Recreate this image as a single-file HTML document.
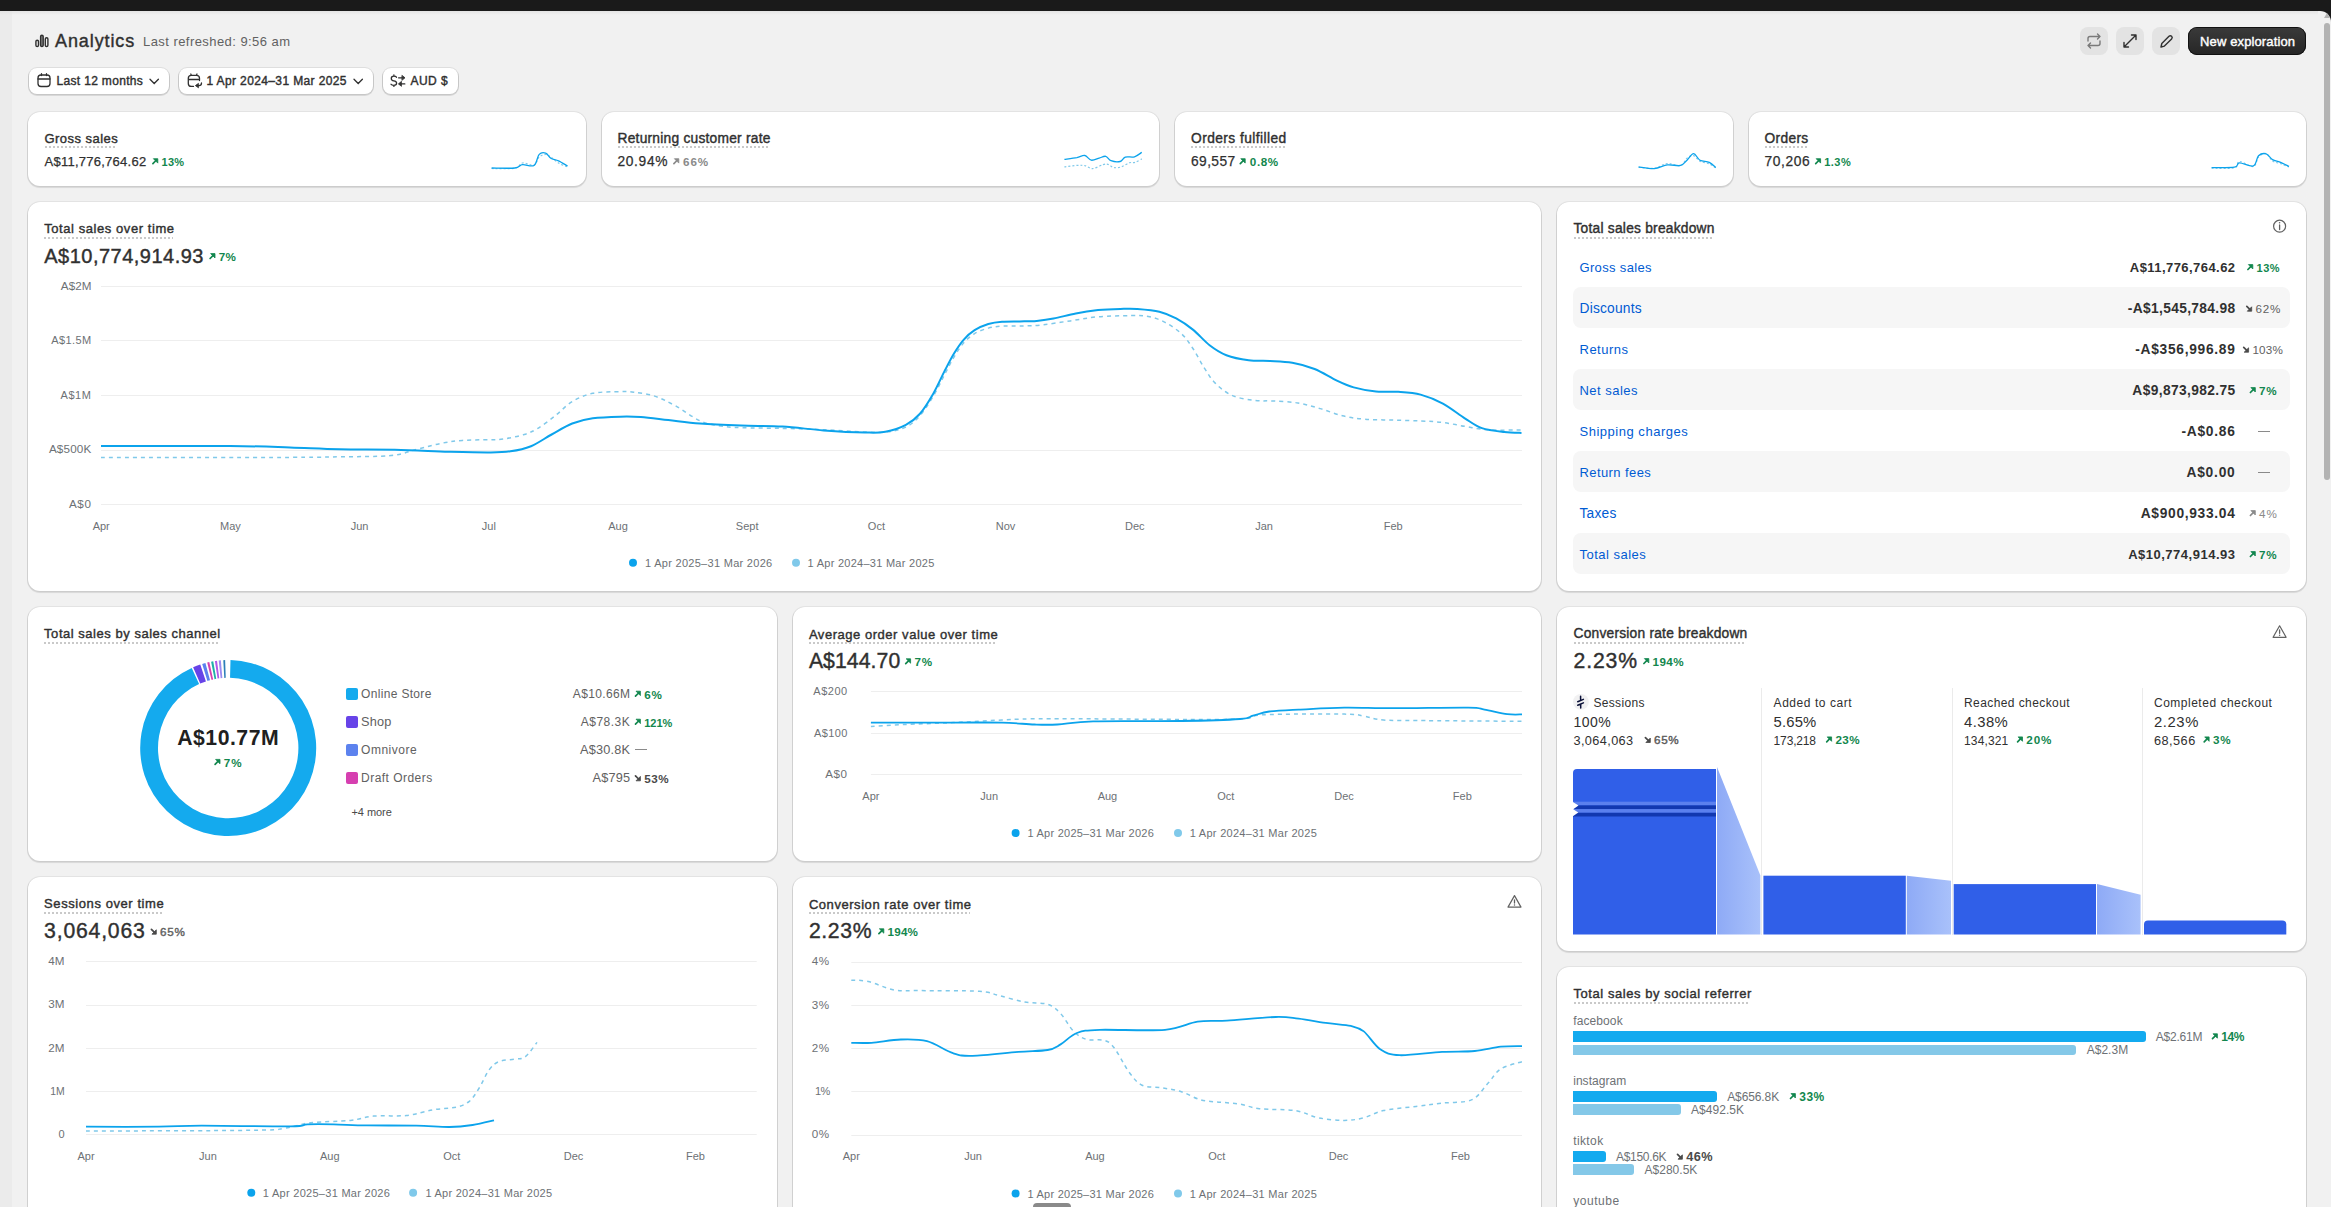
<!DOCTYPE html><html><head><meta charset="utf-8"><style>
html,body{margin:0;padding:0}
html{width:2331px;height:1207px;overflow:hidden}
body{width:2331px;height:1207px;overflow:hidden;position:relative;background:#1a1a1a;font-family:"Liberation Sans", sans-serif}
.t{position:absolute;white-space:nowrap;line-height:1}
svg{position:absolute;left:0;top:0;overflow:visible}
</style></head><body><div id="page" style="position:absolute;left:0;top:0;width:2331px;height:1207px;overflow:hidden">
<div style="position:absolute;left:0px;top:11px;width:12px;height:1196px;background:#ebebeb"></div>
<div style="position:absolute;left:12px;top:11px;width:2319px;height:1196px;background:#f1f1f1;border-top-right-radius:11px"></div>
<div style="position:absolute;left:0px;top:11px;width:12px;height:4px;background:linear-gradient(#e2e2e2,#ebebeb)"></div>
<div style="position:absolute;left:12px;top:11px;width:2306px;height:4px;background:linear-gradient(#e4e4e4,#f1f1f1)"></div>
<svg width="2331" height="1207"><path d="M2324,18 L2330,18 L2327,13 Z" fill="#b3b3b3"/></svg>
<div style="position:absolute;left:2324px;top:23px;width:6px;height:457px;background:#b3b3b3;border-radius:3px"></div>
<svg width="2331" height="1207"><g fill="none" stroke="#303030" stroke-width="1.4">
<rect x="35.9" y="40.3" width="2.6" height="6.2" rx="1.3"/><rect x="40.6" y="35.3" width="2.6" height="11.2" rx="1.3" fill="#888"/><rect x="45.3" y="37.7" width="2.6" height="8.8" rx="1.3"/></g></svg>
<div class="t" style="left:55px;top:32.00px;font-size:18px;font-weight:400;color:#303030;-webkit-text-stroke:0.4px #303030;letter-spacing:0.9px;">Analytics</div>
<div class="t" style="left:143px;top:35.00px;font-size:13px;font-weight:400;color:#616161;letter-spacing:0.442px;">Last refreshed: 9:56 am</div>
<div style="position:absolute;left:29px;top:68px;width:140px;height:26px;background:#fff;border-radius:8px;box-shadow:0 0 0 1px rgba(0,0,0,0.08),0 1px 0 1px rgba(0,0,0,0.10)"></div>
<div style="position:absolute;left:179px;top:68px;width:194px;height:26px;background:#fff;border-radius:8px;box-shadow:0 0 0 1px rgba(0,0,0,0.08),0 1px 0 1px rgba(0,0,0,0.10)"></div>
<div style="position:absolute;left:383px;top:68px;width:75px;height:26px;background:#fff;border-radius:8px;box-shadow:0 0 0 1px rgba(0,0,0,0.08),0 1px 0 1px rgba(0,0,0,0.10)"></div>
<svg width="2331" height="1207"><g fill="none" stroke="#303030" stroke-width="1.3" stroke-linecap="round">
<rect x="38" y="75" width="12" height="11.5" rx="3"/><path d="M38,79 H50 M41.5,73.7 V75.5 M46.5,73.7 V75.5"/>
<path d="M150,79.3 L154.2,83.5 L158.4,79.3"/>
<path d="M193.5,86.4 H191.3 A3,3 0 0 1 188.3,83.4 V78.3 A3,3 0 0 1 191.3,75.3 H196.5 A3,3 0 0 1 199.5,78.3 V80.6 M188.3,79.5 H199.5 M190.8,74 L191.3,75.3 M196.5,75.3 L197,74"/>
<path d="M201.5,83 Q201.5,85.6 199,85.6 H196.5"/><path d="M198.2,83.6 L195.4,85.6 L198.2,87.6 Z" fill="#303030" stroke-width="0.8"/>
<path d="M154,79.3 L158.2,83.5 L162.4,79.3" transform="translate(200,0)"/>
<path d="M396.5,77.3 Q396,76.2 393.8,76.2 Q391.3,76.2 391.3,78.4 Q391.3,80.5 393.8,80.8 Q396.6,81.1 396.6,83.2 Q396.6,85.3 393.8,85.3 Q391.6,85.3 391,84.2 M393.9,75 V76.2 M393.9,85.3 V86.4"/>
<path d="M398.6,77.8 H402.5 M404.8,83.9 H400.9"/><path d="M402.2,75.6 L405,77.8 L402.2,80.1 Z M401.2,81.6 L398.4,83.9 L401.2,86.1 Z" fill="#303030" stroke-width="0.8"/>
</g></svg>
<div class="t" style="left:56.5px;top:75.00px;font-size:12px;font-weight:400;color:#303030;-webkit-text-stroke:0.4px #303030;letter-spacing:0.331px;">Last 12 months</div>
<div class="t" style="left:206.5px;top:75.00px;font-size:12px;font-weight:400;color:#303030;-webkit-text-stroke:0.4px #303030;letter-spacing:0.374px;">1 Apr 2024–31 Mar 2025</div>
<div class="t" style="left:410.5px;top:75.00px;font-size:12px;font-weight:400;color:#303030;-webkit-text-stroke:0.4px #303030;letter-spacing:0.429px;">AUD $</div>
<div style="position:absolute;left:2080px;top:27px;width:28px;height:28px;background:#e3e3e3;border-radius:8px"></div>
<div style="position:absolute;left:2116px;top:27px;width:28px;height:28px;background:#e3e3e3;border-radius:8px"></div>
<div style="position:absolute;left:2152px;top:27px;width:28px;height:28px;background:#e3e3e3;border-radius:8px"></div>
<svg width="2331" height="1207"><g fill="none" stroke-width="1.4" stroke-linecap="round" stroke-linejoin="round">
<path stroke="#7a7a7a" d="M2088,41 V38.5 A2,2 0 0 1 2090,36.5 H2100 M2097.5,34 L2100,36.5 L2097.5,39 M2100,41 V43.5 A2,2 0 0 1 2098,45.5 H2088 M2090.5,43 L2088,45.5 L2090.5,48"/>
<path stroke="#303030" d="M2124,47 L2136,35 M2131.5,35 H2136 V39.5 M2124,42.5 V47 H2128.5"/>
<path stroke="#303030" d="M2161,47 L2161.8,43.5 L2169,36.3 A1.8,1.8 0 0 1 2171.6,38.9 L2164.4,46.1 Z"/>
</g></svg>
<div style="position:absolute;left:2188px;top:27px;width:118px;height:28px;background:linear-gradient(#3a3a3a,#262626);border-radius:9px;box-shadow:0 0 0 1px #111 inset,0 1px 0 rgba(255,255,255,0.2) inset"></div>
<div class="t" style="left:2200px;top:35.00px;font-size:13px;font-weight:400;color:#fff;-webkit-text-stroke:0.4px #fff;letter-spacing:0.13px;">New exploration</div>
<div style="position:absolute;left:28px;top:112px;width:558px;height:74px;background:#fff;border-radius:12px;box-shadow:0 0 0 1px rgba(0,0,0,0.055),0 1px 0 1px rgba(0,0,0,0.075),0 2px 2px rgba(0,0,0,0.03)"></div>
<div style="position:absolute;left:602px;top:112px;width:557px;height:74px;background:#fff;border-radius:12px;box-shadow:0 0 0 1px rgba(0,0,0,0.055),0 1px 0 1px rgba(0,0,0,0.075),0 2px 2px rgba(0,0,0,0.03)"></div>
<div style="position:absolute;left:1175px;top:112px;width:558px;height:74px;background:#fff;border-radius:12px;box-shadow:0 0 0 1px rgba(0,0,0,0.055),0 1px 0 1px rgba(0,0,0,0.075),0 2px 2px rgba(0,0,0,0.03)"></div>
<div style="position:absolute;left:1749px;top:112px;width:557px;height:74px;background:#fff;border-radius:12px;box-shadow:0 0 0 1px rgba(0,0,0,0.055),0 1px 0 1px rgba(0,0,0,0.075),0 2px 2px rgba(0,0,0,0.03)"></div>
<div class="t" style="left:44.5px;top:132.00px;font-size:13px;font-weight:400;color:#303030;-webkit-text-stroke:0.4px #303030;letter-spacing:0.46px;">Gross sales</div>
<div style="position:absolute;left:44.5px;top:146px;width:72.2px;height:2px;background-image:linear-gradient(90deg,#c9c9c9 50%,transparent 50%);background-size:4px 2px"></div>
<div class="t" style="left:44.5px;top:155.00px;font-size:13px;font-weight:400;color:#303030;-webkit-text-stroke:0.25px #303030;letter-spacing:0.254px;">A$11,776,764.62</div>
<svg width="2331" height="1207"><path d="M152.9,163.6 L156,160.5" stroke="#12874e" stroke-width="1.7" stroke-linecap="round"/><path d="M153.4,158.7 H157.8 V163.1 Z" fill="#12874e" stroke="#12874e" stroke-width="0.8" stroke-linejoin="round"/></svg>
<div class="t" style="left:161.4px;top:157.00px;font-size:11px;font-weight:700;color:#12874e;letter-spacing:0.374px;">13%</div>
<div class="t" style="left:617.5px;top:132.00px;font-size:13.78px;font-weight:400;color:#303030;-webkit-text-stroke:0.4px #303030;letter-spacing:0.24px;">Returning customer rate</div>
<div style="position:absolute;left:617.5px;top:146px;width:152.0px;height:2px;background-image:linear-gradient(90deg,#c9c9c9 50%,transparent 50%);background-size:4px 2px"></div>
<div class="t" style="left:617.5px;top:155.00px;font-size:13.78px;font-weight:400;color:#303030;-webkit-text-stroke:0.25px #303030;letter-spacing:0.653px;">20.94%</div>
<svg width="2331" height="1207"><path d="M673.9,163.6 L677,160.5" stroke="#8a8a8a" stroke-width="1.7" stroke-linecap="round"/><path d="M674.4,158.7 H678.8 V163.1 Z" fill="#8a8a8a" stroke="#8a8a8a" stroke-width="0.8" stroke-linejoin="round"/></svg>
<div class="t" style="left:683px;top:156.00px;font-size:11.66px;font-weight:700;color:#8a8a8a;letter-spacing:0.9px;">66%</div>
<div class="t" style="left:1191px;top:132.00px;font-size:13.78px;font-weight:400;color:#303030;-webkit-text-stroke:0.4px #303030;letter-spacing:0.431px;">Orders fulfilled</div>
<div style="position:absolute;left:1191px;top:146px;width:94.20000000000005px;height:2px;background-image:linear-gradient(90deg,#c9c9c9 50%,transparent 50%);background-size:4px 2px"></div>
<div class="t" style="left:1191px;top:155.00px;font-size:13.78px;font-weight:400;color:#303030;-webkit-text-stroke:0.25px #303030;letter-spacing:0.41px;">69,557</div>
<svg width="2331" height="1207"><path d="M1240.3000000000002,163.6 L1243.4,160.5" stroke="#12874e" stroke-width="1.7" stroke-linecap="round"/><path d="M1240.8000000000002,158.7 H1245.2 V163.1 Z" fill="#12874e" stroke="#12874e" stroke-width="0.8" stroke-linejoin="round"/></svg>
<div class="t" style="left:1249.8px;top:156.00px;font-size:11.66px;font-weight:700;color:#12874e;letter-spacing:0.617px;">0.8%</div>
<div class="t" style="left:1764.6px;top:132.00px;font-size:13.78px;font-weight:400;color:#303030;-webkit-text-stroke:0.4px #303030;letter-spacing:0.317px;">Orders</div>
<div style="position:absolute;left:1764.6px;top:146px;width:42.59999999999991px;height:2px;background-image:linear-gradient(90deg,#c9c9c9 50%,transparent 50%);background-size:4px 2px"></div>
<div class="t" style="left:1764.6px;top:155.00px;font-size:13.78px;font-weight:400;color:#303030;-webkit-text-stroke:0.25px #303030;letter-spacing:0.57px;">70,206</div>
<svg width="2331" height="1207"><path d="M1815.7,163.6 L1818.8,160.5" stroke="#12874e" stroke-width="1.7" stroke-linecap="round"/><path d="M1816.2,158.7 H1820.6 V163.1 Z" fill="#12874e" stroke="#12874e" stroke-width="0.8" stroke-linejoin="round"/></svg>
<div class="t" style="left:1824.2px;top:157.00px;font-size:11px;font-weight:700;color:#12874e;letter-spacing:0.467px;">1.3%</div>
<svg width="2331" height="1207"><path d="M491.6,168.5 C495.5,168.5 509.6,169.2 514.8,168.3 C519.9,167.4 519.3,163.6 522.5,163.0 C525.7,162.4 531.2,166.0 534.0,165.0 C536.8,164.0 537.2,158.8 539.2,157.0 C541.2,155.2 543.8,154.5 545.7,154.5 C547.6,154.5 548.7,155.6 550.8,157.0 C552.9,158.4 555.7,161.3 558.5,163.0 C561.3,164.7 566.1,166.3 567.6,167.0" fill="none" stroke="#80c9ea" stroke-width="1.2" stroke-dasharray="2 2"/><path d="M491.6,168.0 C495.5,168.0 509.6,168.6 514.8,168.0 C519.9,167.4 519.3,165.1 522.5,164.7 C525.7,164.3 531.2,167.2 534.0,165.5 C536.8,163.8 537.2,156.5 539.2,154.4 C541.2,152.3 543.8,152.5 545.7,153.2 C547.6,153.8 548.7,157.0 550.8,158.3 C552.9,159.6 555.7,159.6 558.5,160.9 C561.3,162.2 566.1,165.2 567.6,166.0" fill="none" stroke="#0ba3ec" stroke-width="1.3"/></svg>
<svg width="2331" height="1207"><path d="M1064.4,166.8 C1066.5,166.6 1073.5,165.6 1076.9,165.4 C1080.3,165.2 1082.2,165.1 1084.8,165.6 C1087.4,166.1 1089.6,168.8 1092.6,168.6 C1095.6,168.4 1100.4,165.4 1103.0,164.7 C1105.6,164.0 1106.2,163.9 1108.0,164.4 C1109.8,164.9 1111.4,167.1 1113.6,167.5 C1115.8,167.9 1118.4,167.8 1121.0,167.0 C1123.6,166.2 1127.0,163.6 1129.3,162.8 C1131.6,162.0 1132.9,163.1 1135.0,162.4 C1137.1,161.8 1140.7,159.5 1141.8,158.9" fill="none" stroke="#80c9ea" stroke-width="1.2" stroke-dasharray="2 2"/><path d="M1064.4,159.4 C1066.5,159.1 1073.5,158.2 1076.9,157.6 C1080.3,156.9 1082.4,155.1 1084.8,155.5 C1087.2,155.9 1088.9,159.8 1091.3,160.2 C1093.7,160.6 1096.8,158.8 1099.2,158.1 C1101.6,157.4 1103.7,155.9 1105.7,156.3 C1107.7,156.7 1108.6,159.8 1111.0,160.7 C1113.4,161.6 1117.7,162.1 1120.1,161.5 C1122.5,160.9 1122.9,157.9 1125.3,157.1 C1127.7,156.3 1131.8,157.6 1134.5,156.8 C1137.2,156.0 1140.6,153.1 1141.8,152.4" fill="none" stroke="#0ba3ec" stroke-width="1.3"/></svg>
<svg width="2331" height="1207"><path d="M1638.6,167.3 C1641.2,167.5 1649.5,168.8 1654.3,168.2 C1659.1,167.6 1663.0,163.9 1667.4,163.5 C1671.8,163.1 1677.2,166.7 1680.5,165.8 C1683.8,164.9 1684.8,159.9 1687.0,158.2 C1689.2,156.5 1691.4,155.2 1693.6,155.7 C1695.8,156.2 1697.4,159.8 1700.0,161.2 C1702.6,162.5 1706.7,162.7 1709.3,163.8 C1711.9,164.9 1714.7,167.3 1715.8,168.0" fill="none" stroke="#80c9ea" stroke-width="1.2" stroke-dasharray="2 2"/><path d="M1638.6,166.8 C1641.2,167.1 1649.5,168.9 1654.3,168.6 C1659.1,168.3 1663.0,165.4 1667.4,164.9 C1671.8,164.4 1677.2,166.2 1680.5,165.4 C1683.8,164.6 1684.8,162.1 1687.0,160.2 C1689.2,158.2 1691.4,153.7 1693.6,153.7 C1695.8,153.7 1697.4,158.8 1700.0,160.2 C1702.6,161.6 1706.7,161.1 1709.3,162.3 C1711.9,163.5 1714.7,166.6 1715.8,167.5" fill="none" stroke="#0ba3ec" stroke-width="1.3"/></svg>
<svg width="2331" height="1207"><path d="M2211.6,168.2 C2215.4,168.1 2229.8,168.9 2234.4,167.8 C2239.1,166.7 2236.3,161.7 2239.5,161.5 C2242.7,161.3 2250.2,167.2 2253.4,166.5 C2256.6,165.8 2256.4,159.2 2258.5,157.0 C2260.6,154.8 2263.8,152.8 2266.1,153.5 C2268.4,154.2 2270.2,159.3 2272.5,161.0 C2274.8,162.7 2277.2,162.5 2280.0,163.5 C2282.8,164.5 2287.5,166.4 2289.0,167.0" fill="none" stroke="#80c9ea" stroke-width="1.2" stroke-dasharray="2 2"/><path d="M2211.6,167.7 C2215.4,167.6 2229.8,168.0 2234.4,167.2 C2239.1,166.4 2236.3,163.1 2239.5,162.9 C2242.7,162.7 2250.2,167.1 2253.4,165.9 C2256.6,164.7 2256.4,157.8 2258.5,155.8 C2260.6,153.8 2263.8,153.2 2266.1,153.8 C2268.4,154.4 2270.2,158.2 2272.5,159.6 C2274.8,161.0 2277.2,161.0 2280.0,162.1 C2282.8,163.2 2287.5,165.7 2289.0,166.4" fill="none" stroke="#0ba3ec" stroke-width="1.3"/></svg>
<div style="position:absolute;left:28px;top:202px;width:1513px;height:389px;background:#fff;border-radius:12px;box-shadow:0 0 0 1px rgba(0,0,0,0.055),0 1px 0 1px rgba(0,0,0,0.075),0 2px 2px rgba(0,0,0,0.03)"></div>
<div class="t" style="left:44.2px;top:222.00px;font-size:13px;font-weight:400;color:#303030;-webkit-text-stroke:0.4px #303030;letter-spacing:0.567px;">Total sales over time</div>
<div style="position:absolute;left:44.2px;top:236.5px;width:128.8px;height:2.0px;background-image:linear-gradient(90deg,#c9c9c9 50%,transparent 50%);background-size:4px 2px"></div>
<div class="t" style="left:44.2px;top:246.00px;font-size:20px;font-weight:400;color:#303030;-webkit-text-stroke:0.4px #303030;letter-spacing:0.495px;">A$10,774,914.93</div>
<svg width="2331" height="1207"><path d="M210.1,258.5 L213.2,255.4" stroke="#12874e" stroke-width="1.7" stroke-linecap="round"/><path d="M210.6,253.6 H215.0 V258.0 Z" fill="#12874e" stroke="#12874e" stroke-width="0.8" stroke-linejoin="round"/></svg>
<div class="t" style="left:218.79999999999998px;top:251.00px;font-size:11.66px;font-weight:700;color:#12874e;letter-spacing:0.272px;">7%</div>
<svg width="2331" height="1207"><path d="M101,286.5 H1522" stroke="#eeeeee" stroke-width="1"/><path d="M101,340.5 H1522" stroke="#eeeeee" stroke-width="1"/><path d="M101,395.5 H1522" stroke="#eeeeee" stroke-width="1"/><path d="M101,450.5 H1522" stroke="#eeeeee" stroke-width="1"/><path d="M101,504.5 H1522" stroke="#eeeeee" stroke-width="1"/></svg>
<div class="t" style="right:2239.5px;top:280.00px;font-size:11.66px;font-weight:400;color:#6d7175;letter-spacing:0.053px;">A$2M</div>
<div class="t" style="right:2239.5px;top:335.00px;font-size:11px;font-weight:400;color:#6d7175;letter-spacing:0.392px;">A$1.5M</div>
<div class="t" style="right:2239.5px;top:390.00px;font-size:11px;font-weight:400;color:#6d7175;letter-spacing:0.543px;">A$1M</div>
<div class="t" style="right:2239.5px;top:443.00px;font-size:11.66px;font-weight:400;color:#6d7175;letter-spacing:0.185px;">A$500K</div>
<div class="t" style="right:2239.5px;top:498.00px;font-size:11.66px;font-weight:400;color:#6d7175;letter-spacing:0.59px;">A$0</div>
<div class="t" style="left:101.2px;transform:translateX(-50%);top:521.00px;font-size:11px;font-weight:400;color:#6d7175;">Apr</div>
<div class="t" style="left:230.39999999999998px;transform:translateX(-50%);top:521.00px;font-size:11px;font-weight:400;color:#6d7175;">May</div>
<div class="t" style="left:359.59999999999997px;transform:translateX(-50%);top:521.00px;font-size:11px;font-weight:400;color:#6d7175;">Jun</div>
<div class="t" style="left:488.79999999999995px;transform:translateX(-50%);top:521.00px;font-size:11px;font-weight:400;color:#6d7175;">Jul</div>
<div class="t" style="left:618.0px;transform:translateX(-50%);top:521.00px;font-size:11px;font-weight:400;color:#6d7175;">Aug</div>
<div class="t" style="left:747.2px;transform:translateX(-50%);top:521.00px;font-size:11px;font-weight:400;color:#6d7175;">Sept</div>
<div class="t" style="left:876.4px;transform:translateX(-50%);top:521.00px;font-size:11px;font-weight:400;color:#6d7175;">Oct</div>
<div class="t" style="left:1005.5999999999999px;transform:translateX(-50%);top:521.00px;font-size:11px;font-weight:400;color:#6d7175;">Nov</div>
<div class="t" style="left:1134.8px;transform:translateX(-50%);top:521.00px;font-size:11px;font-weight:400;color:#6d7175;">Dec</div>
<div class="t" style="left:1264.0px;transform:translateX(-50%);top:521.00px;font-size:11px;font-weight:400;color:#6d7175;">Jan</div>
<div class="t" style="left:1393.2px;transform:translateX(-50%);top:521.00px;font-size:11px;font-weight:400;color:#6d7175;">Feb</div>
<svg width="2331" height="1207"><path d="M101.0,457.4 C131.1,457.4 241.9,457.5 281.6,457.4 C321.4,457.3 321.3,457.1 339.5,456.8 C357.7,456.5 377.9,456.8 391.0,455.5 C404.1,454.2 409.9,450.9 418.4,448.9 C426.9,446.8 434.5,444.6 441.8,443.2 C449.1,441.8 454.4,441.0 462.4,440.4 C470.4,439.8 482.9,439.9 489.8,439.7 C496.7,439.5 497.9,439.9 503.6,439.0 C509.3,438.1 518.5,436.3 524.2,434.5 C529.9,432.7 532.6,431.5 537.9,428.3 C543.1,425.1 550.0,419.8 555.7,415.3 C561.4,410.9 566.0,405.3 572.2,401.6 C578.4,397.9 584.8,395.0 592.8,393.3 C600.8,391.6 613.4,391.8 620.3,391.6 C627.2,391.4 628.3,391.4 634.0,392.2 C639.7,392.9 647.7,393.9 654.6,396.1 C661.5,398.4 667.6,401.6 675.2,405.7 C682.8,409.8 692.4,417.4 700.0,420.8 C707.6,424.2 713.7,424.9 720.6,426.0 C727.5,427.1 730.9,427.3 741.2,427.7 C751.5,428.1 768.7,428.1 782.4,428.4 C796.1,428.7 809.9,429.1 823.6,429.7 C837.3,430.3 854.0,431.6 864.7,432.0 C875.4,432.4 881.1,432.6 888.0,431.8 C894.9,431.0 900.6,429.6 905.9,427.0 C911.2,424.4 915.1,421.2 919.7,416.0 C924.3,410.8 929.3,402.8 933.4,396.0 C937.5,389.2 941.0,381.5 944.4,375.0 C947.8,368.5 950.8,362.3 954.0,357.0 C957.2,351.7 960.2,346.9 963.6,343.0 C967.0,339.1 970.5,336.1 974.6,333.6 C978.7,331.1 983.7,329.4 988.3,328.1 C992.9,326.9 996.7,326.5 1002.0,326.1 C1007.3,325.8 1013.3,326.2 1020.0,326.0 C1026.7,325.8 1033.9,325.8 1042.3,324.9 C1050.7,324.0 1060.9,322.2 1070.2,320.9 C1079.5,319.5 1087.9,317.7 1098.1,316.8 C1108.3,315.9 1123.1,315.7 1131.5,315.6 C1139.9,315.5 1142.7,315.3 1148.3,316.4 C1153.9,317.5 1159.4,319.4 1165.0,322.3 C1170.6,325.2 1177.0,329.6 1181.7,334.0 C1186.4,338.4 1189.2,342.9 1192.9,348.5 C1196.6,354.1 1200.3,361.7 1204.0,367.5 C1207.7,373.3 1210.5,378.5 1215.2,383.1 C1219.9,387.8 1225.5,392.5 1232.0,395.4 C1238.5,398.3 1247.3,399.5 1254.2,400.4 C1261.1,401.3 1266.0,400.6 1273.3,401.0 C1280.6,401.4 1290.1,401.7 1297.9,403.0 C1305.7,404.3 1312.8,406.5 1320.2,408.6 C1327.6,410.7 1335.1,414.0 1342.5,415.8 C1349.9,417.6 1356.4,418.5 1364.8,419.2 C1373.2,419.9 1383.4,419.8 1392.7,420.1 C1402.0,420.4 1412.2,420.5 1420.6,420.9 C1429.0,421.3 1435.5,421.6 1442.9,422.5 C1450.3,423.4 1457.8,425.2 1465.2,426.4 C1472.6,427.6 1478.1,429.2 1487.5,429.8 C1496.9,430.4 1515.8,430.0 1521.5,430.0" fill="none" stroke="#80c9ea" stroke-width="1.5" stroke-dasharray="4 4"/><path d="M101.0,446.0 C122.5,446.0 198.5,445.8 230.0,446.0 C261.5,446.2 271.8,446.9 290.0,447.5 C308.2,448.1 322.0,448.9 339.5,449.3 C357.0,449.7 376.8,449.3 395.0,449.7 C413.2,450.1 432.8,451.2 448.6,451.7 C464.4,452.1 479.5,452.5 489.8,452.4 C500.1,452.3 503.5,452.3 510.4,451.3 C517.3,450.3 524.1,449.0 531.0,446.2 C537.9,443.4 544.7,438.3 551.6,434.5 C558.5,430.7 565.3,426.2 572.2,423.5 C579.1,420.8 584.8,419.4 592.8,418.3 C600.8,417.2 612.3,416.9 620.3,416.7 C628.3,416.5 632.8,416.5 640.8,417.1 C648.8,417.7 658.4,419.0 668.3,420.1 C678.2,421.2 687.9,422.7 700.0,423.6 C712.1,424.5 727.5,425.1 741.2,425.6 C754.9,426.1 768.7,425.8 782.4,426.6 C796.1,427.4 809.9,429.4 823.6,430.4 C837.3,431.4 854.4,432.3 864.7,432.5 C875.0,432.7 878.4,433.1 885.3,431.8 C892.2,430.5 900.2,427.9 905.9,424.9 C911.6,421.9 915.1,419.2 919.7,414.0 C924.3,408.8 929.3,400.5 933.4,393.4 C937.5,386.3 941.0,378.0 944.4,371.4 C947.8,364.8 950.8,358.8 954.0,353.5 C957.2,348.2 960.2,343.7 963.6,339.8 C967.0,335.9 970.5,332.8 974.6,330.2 C978.7,327.6 983.7,325.4 988.3,324.0 C992.9,322.6 996.7,322.1 1002.0,321.7 C1007.3,321.3 1014.2,321.5 1020.0,321.4 C1025.8,321.3 1031.1,321.4 1036.7,320.9 C1042.3,320.4 1047.0,319.9 1053.5,318.6 C1060.0,317.4 1068.4,314.8 1075.8,313.4 C1083.2,312.0 1090.7,310.9 1098.1,310.1 C1105.5,309.4 1113.9,309.1 1120.4,308.9 C1126.9,308.7 1130.6,308.4 1137.1,308.9 C1143.6,309.4 1152.9,310.1 1159.4,311.7 C1165.9,313.3 1170.6,315.4 1176.2,318.4 C1181.8,321.4 1187.3,325.1 1192.9,329.6 C1198.5,334.1 1204.0,340.9 1209.6,345.2 C1215.2,349.5 1219.9,352.7 1226.4,355.2 C1232.9,357.7 1241.4,359.3 1248.7,360.3 C1256.0,361.3 1262.7,360.6 1270.0,361.0 C1277.3,361.4 1284.9,361.5 1292.3,362.8 C1299.7,364.1 1307.2,366.0 1314.6,369.0 C1322.0,372.0 1330.4,377.6 1336.9,380.7 C1343.4,383.8 1347.2,385.6 1353.7,387.4 C1360.2,389.2 1368.6,390.9 1376.0,391.6 C1383.4,392.3 1390.9,391.3 1398.3,391.8 C1405.7,392.3 1413.2,392.6 1420.6,394.6 C1428.0,396.6 1435.5,399.6 1442.9,403.6 C1450.3,407.6 1458.7,414.5 1465.2,418.6 C1471.7,422.7 1475.4,425.9 1481.9,428.1 C1488.4,430.3 1497.6,431.2 1504.2,432.0 C1510.8,432.8 1518.6,432.8 1521.5,432.9" fill="none" stroke="#0ba3ec" stroke-width="2.0"/></svg>
<svg width="2331" height="1207"><circle cx="633" cy="562.8" r="4" fill="#0ba3ec"/><circle cx="796" cy="562.8" r="4" fill="#80c9ea"/></svg>
<div class="t" style="left:645px;top:558.00px;font-size:11px;font-weight:400;color:#6d7175;letter-spacing:0.29px;">1 Apr 2025–31 Mar 2026</div>
<div class="t" style="left:807.6px;top:558.00px;font-size:11px;font-weight:400;color:#6d7175;letter-spacing:0.266px;">1 Apr 2024–31 Mar 2025</div>
<div style="position:absolute;left:1557px;top:202px;width:749px;height:389px;background:#fff;border-radius:12px;box-shadow:0 0 0 1px rgba(0,0,0,0.055),0 1px 0 1px rgba(0,0,0,0.075),0 2px 2px rgba(0,0,0,0.03)"></div>
<div class="t" style="left:1573.5px;top:222.00px;font-size:13.78px;font-weight:400;color:#303030;-webkit-text-stroke:0.4px #303030;letter-spacing:0.237px;">Total sales breakdown</div>
<div style="position:absolute;left:1573.5px;top:236.5px;width:140.0px;height:2.0px;background-image:linear-gradient(90deg,#c9c9c9 50%,transparent 50%);background-size:4px 2px"></div>
<svg width="2331" height="1207"><circle cx="2279.6" cy="226.2" r="6" fill="none" stroke="#616161" stroke-width="1.2"/><path d="M2279.6,225 V229.5" stroke="#616161" stroke-width="1.3" stroke-linecap="round"/><circle cx="2279.6" cy="222.8" r="0.8" fill="#616161"/></svg>
<div class="t" style="left:1579.5px;top:261.00px;font-size:13px;font-weight:400;color:#005bd3;letter-spacing:0.34px;">Gross sales</div>
<div class="t" style="right:95.5px;top:261.00px;font-size:13px;font-weight:700;color:#303030;letter-spacing:0.442px;">A$11,776,764.62</div>
<svg width="2331" height="1207"><path d="M2247.9,269.5 L2251,266.4" stroke="#12874e" stroke-width="1.7" stroke-linecap="round"/><path d="M2248.4,264.59999999999997 H2252.8 V269.0 Z" fill="#12874e" stroke="#12874e" stroke-width="0.8" stroke-linejoin="round"/></svg>
<div class="t" style="left:2256.6px;top:263.00px;font-size:11px;font-weight:700;color:#12874e;letter-spacing:0.424px;">13%</div>
<div style="position:absolute;left:1573px;top:287px;width:717px;height:41px;background:#f6f6f6;border-radius:8px"></div>
<div class="t" style="left:1579.5px;top:302.00px;font-size:13.78px;font-weight:400;color:#005bd3;letter-spacing:0.2px;">Discounts</div>
<div class="t" style="right:95.5px;top:302.00px;font-size:13.78px;font-weight:700;color:#303030;letter-spacing:0.338px;">-A$1,545,784.98</div>
<svg width="2331" height="1207"><path d="M2246.8,306.29999999999995 L2249.9,309.4" stroke="#4a4a4a" stroke-width="1.7" stroke-linecap="round"/><path d="M2247.3,311.2 H2251.7000000000003 V306.79999999999995 Z" fill="#4a4a4a" stroke="#4a4a4a" stroke-width="0.8" stroke-linejoin="round"/></svg>
<div class="t" style="left:2255.5px;top:303.00px;font-size:11.66px;font-weight:400;color:#616161;letter-spacing:0.79px;">62%</div>
<div class="t" style="left:1579.5px;top:343.00px;font-size:13px;font-weight:400;color:#005bd3;letter-spacing:0.501px;">Returns</div>
<div class="t" style="right:95.5px;top:343.00px;font-size:13.78px;font-weight:700;color:#303030;letter-spacing:0.702px;">-A$356,996.89</div>
<svg width="2331" height="1207"><path d="M2243.7000000000003,347.29999999999995 L2246.8,350.4" stroke="#4a4a4a" stroke-width="1.7" stroke-linecap="round"/><path d="M2244.2000000000003,352.2 H2248.6000000000004 V347.79999999999995 Z" fill="#4a4a4a" stroke="#4a4a4a" stroke-width="0.8" stroke-linejoin="round"/></svg>
<div class="t" style="left:2252.4px;top:344.00px;font-size:11.66px;font-weight:400;color:#616161;letter-spacing:0.201px;">103%</div>
<div style="position:absolute;left:1573px;top:369px;width:717px;height:41px;background:#f6f6f6;border-radius:8px"></div>
<div class="t" style="left:1579.5px;top:384.00px;font-size:13px;font-weight:400;color:#005bd3;letter-spacing:0.48px;">Net sales</div>
<div class="t" style="right:95.5px;top:384.00px;font-size:13.78px;font-weight:700;color:#303030;letter-spacing:0.371px;">A$9,873,982.75</div>
<svg width="2331" height="1207"><path d="M2250.4,392.5 L2253.5,389.4" stroke="#12874e" stroke-width="1.7" stroke-linecap="round"/><path d="M2250.9,387.59999999999997 H2255.3 V392.0 Z" fill="#12874e" stroke="#12874e" stroke-width="0.8" stroke-linejoin="round"/></svg>
<div class="t" style="left:2259.1px;top:385.00px;font-size:11.66px;font-weight:700;color:#12874e;letter-spacing:0.672px;">7%</div>
<div class="t" style="left:1579.5px;top:425.00px;font-size:13px;font-weight:400;color:#005bd3;letter-spacing:0.518px;">Shipping charges</div>
<div class="t" style="right:95.5px;top:425.00px;font-size:13.78px;font-weight:700;color:#303030;letter-spacing:0.713px;">-A$0.86</div>
<div style="position:absolute;left:2257.5px;top:431px;width:12.0px;height:1px;background:#8a8a8a"></div>
<div style="position:absolute;left:1573px;top:451px;width:717px;height:41px;background:#f6f6f6;border-radius:8px"></div>
<div class="t" style="left:1579.5px;top:466.00px;font-size:13px;font-weight:400;color:#005bd3;letter-spacing:0.414px;">Return fees</div>
<div class="t" style="right:95.5px;top:466.00px;font-size:13.78px;font-weight:700;color:#303030;letter-spacing:0.773px;">A$0.00</div>
<div style="position:absolute;left:2257.5px;top:472px;width:12.0px;height:1px;background:#8a8a8a"></div>
<div class="t" style="left:1579.5px;top:507.00px;font-size:13.78px;font-weight:400;color:#005bd3;letter-spacing:0.224px;">Taxes</div>
<div class="t" style="right:95.5px;top:507.00px;font-size:13.78px;font-weight:700;color:#303030;letter-spacing:0.692px;">A$900,933.04</div>
<svg width="2331" height="1207"><path d="M2250.4,515.5 L2253.5,512.4" stroke="#8a8a8a" stroke-width="1.7" stroke-linecap="round"/><path d="M2250.9,510.59999999999997 H2255.3 V515.0 Z" fill="#8a8a8a" stroke="#8a8a8a" stroke-width="0.8" stroke-linejoin="round"/></svg>
<div class="t" style="left:2259.1px;top:508.00px;font-size:11.66px;font-weight:400;color:#8a8a8a;letter-spacing:0.9px;">4%</div>
<div style="position:absolute;left:1573px;top:533px;width:717px;height:41px;background:#f6f6f6;border-radius:8px"></div>
<div class="t" style="left:1579.5px;top:548.00px;font-size:13px;font-weight:400;color:#005bd3;letter-spacing:0.492px;">Total sales</div>
<div class="t" style="right:95.5px;top:548.00px;font-size:13px;font-weight:700;color:#303030;letter-spacing:0.505px;">A$10,774,914.93</div>
<svg width="2331" height="1207"><path d="M2250.4,556.5 L2253.5,553.4" stroke="#12874e" stroke-width="1.7" stroke-linecap="round"/><path d="M2250.9,551.6 H2255.3 V556.0 Z" fill="#12874e" stroke="#12874e" stroke-width="0.8" stroke-linejoin="round"/></svg>
<div class="t" style="left:2259.1px;top:549.00px;font-size:11.66px;font-weight:700;color:#12874e;letter-spacing:0.572px;">7%</div>
<div style="position:absolute;left:28px;top:607px;width:749px;height:254px;background:#fff;border-radius:12px;box-shadow:0 0 0 1px rgba(0,0,0,0.055),0 1px 0 1px rgba(0,0,0,0.075),0 2px 2px rgba(0,0,0,0.03)"></div>
<div class="t" style="left:44.1px;top:627.00px;font-size:13px;font-weight:400;color:#303030;-webkit-text-stroke:0.4px #303030;letter-spacing:0.528px;">Total sales by sales channel</div>
<div style="position:absolute;left:44.1px;top:641.5px;width:175.1px;height:2.0px;background-image:linear-gradient(90deg,#c9c9c9 50%,transparent 50%);background-size:4px 2px"></div>
<svg width="2331" height="1207"><path d="M230.50,660.03 A88,88 0 1 1 191.71,667.92 L199.09,684.12 A70.2,70.2 0 1 0 230.04,677.82 Z" fill="#14aaee"/><path d="M193.11,667.30 A88,88 0 0 1 200.28,664.55 L205.93,681.43 A70.2,70.2 0 0 0 200.21,683.62 Z" fill="#6743e8"/><path d="M202.18,663.94 A88,88 0 0 1 205.42,663.00 L210.03,680.19 A70.2,70.2 0 0 0 207.44,680.94 Z" fill="#5c82ee"/><path d="M207.21,662.54 A88,88 0 0 1 209.30,662.05 L213.13,679.44 A70.2,70.2 0 0 0 211.45,679.83 Z" fill="#d63fb0"/><path d="M211.11,661.68 A88,88 0 0 1 213.22,661.28 L216.25,678.82 A70.2,70.2 0 0 0 214.56,679.14 Z" fill="#20b0a8"/><path d="M214.89,661.01 A88,88 0 0 1 217.02,660.71 L219.28,678.37 A70.2,70.2 0 0 0 217.58,678.61 Z" fill="#b15ae8"/><path d="M218.70,660.51 A88,88 0 0 1 220.84,660.31 L222.33,678.05 A70.2,70.2 0 0 0 220.62,678.21 Z" fill="#9b8cf0"/><path d="M223.29,660.14 A88,88 0 0 1 225.13,660.05 L225.75,677.84 A70.2,70.2 0 0 0 224.28,677.91 Z" fill="#2d7fb8"/></svg>
<div class="t" style="left:228.2px;transform:translateX(-50%);top:727.00px;font-size:21.2px;font-weight:700;color:#202020;letter-spacing:0.525px;">A$10.77M</div>
<svg width="2331" height="1207"><path d="M215.1,764.3 L218.2,761.1999999999999" stroke="#12874e" stroke-width="1.7" stroke-linecap="round"/><path d="M215.6,759.4 H220.0 V763.8 Z" fill="#12874e" stroke="#12874e" stroke-width="0.8" stroke-linejoin="round"/></svg>
<div class="t" style="left:223.79999999999998px;top:757.00px;font-size:11.66px;font-weight:700;color:#12874e;letter-spacing:0.9px;">7%</div>
<div style="position:absolute;left:346px;top:688px;width:12px;height:12px;background:#14aaee;border-radius:2px"></div>
<div class="t" style="left:361.1px;top:688.00px;font-size:12px;font-weight:400;color:#616161;letter-spacing:0.323px;">Online Store</div>
<div class="t" style="right:1700.7px;top:688.00px;font-size:12px;font-weight:400;color:#616161;letter-spacing:0.351px;">A$10.66M</div>
<svg width="2331" height="1207"><path d="M635.5,696.1 L638.6,693.0" stroke="#12874e" stroke-width="1.7" stroke-linecap="round"/><path d="M636.0,691.2 H640.4 V695.6 Z" fill="#12874e" stroke="#12874e" stroke-width="0.8" stroke-linejoin="round"/></svg>
<div class="t" style="left:644.2px;top:689.00px;font-size:11.66px;font-weight:700;color:#12874e;letter-spacing:0.9px;">6%</div>
<div style="position:absolute;left:346px;top:716px;width:12px;height:12px;background:#6743e8;border-radius:2px"></div>
<div class="t" style="left:361.1px;top:716.00px;font-size:12.72px;font-weight:400;color:#616161;letter-spacing:0.168px;">Shop</div>
<div class="t" style="right:1700.7px;top:716.00px;font-size:12px;font-weight:400;color:#616161;letter-spacing:0.502px;">A$78.3K</div>
<svg width="2331" height="1207"><path d="M635.5,724.1 L638.6,721.0" stroke="#12874e" stroke-width="1.7" stroke-linecap="round"/><path d="M636.0,719.2 H640.4 V723.6 Z" fill="#12874e" stroke="#12874e" stroke-width="0.8" stroke-linejoin="round"/></svg>
<div class="t" style="left:644.2px;top:718.00px;font-size:11px;font-weight:700;color:#12874e;">121%</div>
<div style="position:absolute;left:346px;top:744px;width:12px;height:12px;background:#5c82ee;border-radius:2px"></div>
<div class="t" style="left:361.1px;top:744.00px;font-size:12px;font-weight:400;color:#616161;letter-spacing:0.492px;">Omnivore</div>
<div class="t" style="right:1700.7px;top:744.00px;font-size:12.72px;font-weight:400;color:#616161;letter-spacing:0.218px;">A$30.8K</div>
<div style="position:absolute;left:635.4px;top:749px;width:11.600000000000023px;height:1px;background:#8a8a8a"></div>
<div style="position:absolute;left:346px;top:772px;width:12px;height:12px;background:#d63fb0;border-radius:2px"></div>
<div class="t" style="left:361.1px;top:772.00px;font-size:12px;font-weight:400;color:#616161;letter-spacing:0.459px;">Draft Orders</div>
<div class="t" style="right:1700.7px;top:772.00px;font-size:12.72px;font-weight:400;color:#616161;letter-spacing:0.183px;">A$795</div>
<svg width="2331" height="1207"><path d="M635.5,775.9 L638.6,779.0" stroke="#4a4a4a" stroke-width="1.7" stroke-linecap="round"/><path d="M636.0,780.8 H640.4 V776.4 Z" fill="#4a4a4a" stroke="#4a4a4a" stroke-width="0.8" stroke-linejoin="round"/></svg>
<div class="t" style="left:644.2px;top:773.00px;font-size:11.66px;font-weight:700;color:#4a4a4a;letter-spacing:0.49px;">53%</div>
<div class="t" style="left:351.4px;top:807.00px;font-size:11px;font-weight:400;color:#4a4a4a;letter-spacing:-0.032px;">+4 more</div>
<div style="position:absolute;left:793px;top:607px;width:748px;height:254px;background:#fff;border-radius:12px;box-shadow:0 0 0 1px rgba(0,0,0,0.055),0 1px 0 1px rgba(0,0,0,0.075),0 2px 2px rgba(0,0,0,0.03)"></div>
<div class="t" style="left:808.9px;top:628.00px;font-size:13px;font-weight:400;color:#303030;-webkit-text-stroke:0.4px #303030;letter-spacing:0.533px;">Average order value over time</div>
<div style="position:absolute;left:808.9px;top:642px;width:187.80000000000007px;height:2px;background-image:linear-gradient(90deg,#c9c9c9 50%,transparent 50%);background-size:4px 2px"></div>
<div class="t" style="left:808.9px;top:650.00px;font-size:21.2px;font-weight:400;color:#303030;-webkit-text-stroke:0.4px #303030;letter-spacing:0.088px;">A$144.70</div>
<svg width="2331" height="1207"><path d="M905.6999999999999,663.7 L908.8,660.6" stroke="#12874e" stroke-width="1.7" stroke-linecap="round"/><path d="M906.1999999999999,658.8000000000001 H910.5999999999999 V663.2 Z" fill="#12874e" stroke="#12874e" stroke-width="0.8" stroke-linejoin="round"/></svg>
<div class="t" style="left:914.4px;top:656.00px;font-size:11.66px;font-weight:700;color:#12874e;letter-spacing:0.772px;">7%</div>
<svg width="2331" height="1207"><path d="M870.9,691.5 H1522" stroke="#eeeeee" stroke-width="1"/><path d="M870.9,733.5 H1522" stroke="#eeeeee" stroke-width="1"/><path d="M870.9,774.5 H1522" stroke="#eeeeee" stroke-width="1"/></svg>
<div class="t" style="right:1483.3px;top:686.00px;font-size:11px;font-weight:400;color:#6d7175;letter-spacing:0.517px;">A$200</div>
<div class="t" style="right:1483.3px;top:728.00px;font-size:11px;font-weight:400;color:#6d7175;letter-spacing:0.392px;">A$100</div>
<div class="t" style="right:1483.3px;top:768.00px;font-size:11.66px;font-weight:400;color:#6d7175;letter-spacing:0.59px;">A$0</div>
<div class="t" style="left:870.9px;transform:translateX(-50%);top:791.00px;font-size:11px;font-weight:400;color:#6d7175;">Apr</div>
<div class="t" style="left:989.18px;transform:translateX(-50%);top:791.00px;font-size:11px;font-weight:400;color:#6d7175;">Jun</div>
<div class="t" style="left:1107.46px;transform:translateX(-50%);top:791.00px;font-size:11px;font-weight:400;color:#6d7175;">Aug</div>
<div class="t" style="left:1225.74px;transform:translateX(-50%);top:791.00px;font-size:11px;font-weight:400;color:#6d7175;">Oct</div>
<div class="t" style="left:1344.02px;transform:translateX(-50%);top:791.00px;font-size:11px;font-weight:400;color:#6d7175;">Dec</div>
<div class="t" style="left:1462.3px;transform:translateX(-50%);top:791.00px;font-size:11px;font-weight:400;color:#6d7175;">Feb</div>
<svg width="2331" height="1207"><path d="M870.9,726.5 C876.4,726.2 890.4,725.1 904.1,724.5 C917.8,723.9 936.7,723.4 953.0,722.6 C969.3,721.9 985.7,720.6 1002.0,720.0 C1018.3,719.4 1012.8,718.8 1050.8,718.7 C1088.8,718.6 1194.7,719.9 1230.0,719.3 C1265.3,718.6 1243.8,715.7 1262.8,714.8 C1281.8,713.9 1327.5,713.9 1344.3,714.1 C1361.1,714.3 1357.3,715.1 1363.8,716.1 C1370.3,717.1 1373.1,719.2 1383.4,720.0 C1393.7,720.8 1402.7,720.4 1425.8,720.6 C1448.9,720.8 1506.0,721.2 1522.0,721.3" fill="none" stroke="#80c9ea" stroke-width="1.5" stroke-dasharray="4 4"/><path d="M870.9,722.6 C884.6,722.6 931.1,722.6 953.0,722.6 C974.9,722.6 988.4,722.3 1002.0,722.6 C1015.6,722.9 1025.3,724.2 1034.5,724.5 C1043.7,724.8 1047.6,725.0 1057.4,724.5 C1067.2,724.0 1072.6,721.9 1093.2,721.3 C1113.8,720.7 1156.8,721.4 1181.3,721.0 C1205.8,720.6 1228.0,719.9 1240.0,719.0 C1252.0,718.1 1248.1,717.0 1253.0,715.7 C1257.9,714.5 1261.7,712.5 1269.3,711.5 C1276.9,710.5 1286.1,710.2 1298.6,709.6 C1311.1,709.0 1328.5,707.8 1344.3,707.6 C1360.1,707.4 1372.5,708.2 1393.2,708.2 C1413.9,708.2 1453.0,707.4 1468.2,707.6 C1483.4,707.8 1478.0,708.5 1484.5,709.6 C1491.0,710.7 1501.0,713.3 1507.3,714.1 C1513.5,714.9 1519.5,714.4 1522.0,714.4" fill="none" stroke="#0ba3ec" stroke-width="1.8"/></svg>
<svg width="2331" height="1207"><circle cx="1015.6" cy="833.1" r="4" fill="#0ba3ec"/><circle cx="1178" cy="833.1" r="4" fill="#80c9ea"/></svg>
<div class="t" style="left:1027.4px;top:828.00px;font-size:11px;font-weight:400;color:#6d7175;letter-spacing:0.252px;">1 Apr 2025–31 Mar 2026</div>
<div class="t" style="left:1189.7px;top:828.00px;font-size:11px;font-weight:400;color:#6d7175;letter-spacing:0.285px;">1 Apr 2024–31 Mar 2025</div>
<div style="position:absolute;left:1557px;top:607px;width:749px;height:344px;background:#fff;border-radius:12px;box-shadow:0 0 0 1px rgba(0,0,0,0.055),0 1px 0 1px rgba(0,0,0,0.075),0 2px 2px rgba(0,0,0,0.03)"></div>
<div class="t" style="left:1573.5px;top:627.00px;font-size:13.78px;font-weight:400;color:#303030;-webkit-text-stroke:0.4px #303030;letter-spacing:0.224px;">Conversion rate breakdown</div>
<div style="position:absolute;left:1573.5px;top:641.5px;width:172.79999999999995px;height:2.0px;background-image:linear-gradient(90deg,#c9c9c9 50%,transparent 50%);background-size:4px 2px"></div>
<svg width="2331" height="1207"><path d="M2279.6,625.8 L2286.1,637.3 H2273.1 Z" fill="none" stroke="#616161" stroke-width="1.2" stroke-linejoin="round"/><path d="M2279.6,630.0 V633.3" stroke="#616161" stroke-width="1.3" stroke-linecap="round"/><circle cx="2279.6" cy="635.1999999999999" r="0.75" fill="#616161"/></svg>
<div class="t" style="left:1573.5px;top:650.00px;font-size:21.2px;font-weight:400;color:#303030;-webkit-text-stroke:0.4px #303030;letter-spacing:0.869px;">2.23%</div>
<svg width="2331" height="1207"><path d="M1643.9,663.5 L1647,660.4" stroke="#12874e" stroke-width="1.7" stroke-linecap="round"/><path d="M1644.4,658.6 H1648.8 V663.0 Z" fill="#12874e" stroke="#12874e" stroke-width="0.8" stroke-linejoin="round"/></svg>
<div class="t" style="left:1652.6px;top:656.00px;font-size:11.66px;font-weight:700;color:#12874e;letter-spacing:0.401px;">194%</div>
<div style="position:absolute;left:1761px;top:688px;width:1px;height:247px;background:#ebebeb"></div>
<div style="position:absolute;left:1952px;top:688px;width:1px;height:247px;background:#ebebeb"></div>
<div style="position:absolute;left:2142px;top:688px;width:1px;height:247px;background:#ebebeb"></div>
<div class="t" style="left:1593.4px;top:697.00px;font-size:12px;font-weight:400;color:#303030;letter-spacing:0.337px;">Sessions</div>
<div class="t" style="left:1573.5px;top:715.00px;font-size:14px;font-weight:400;color:#303030;letter-spacing:0.436px;">100%</div>
<div class="t" style="left:1573.5px;top:735.00px;font-size:12.72px;font-weight:400;color:#303030;letter-spacing:0.378px;">3,064,063</div>
<svg width="2331" height="1207"><path d="M1645.4,737.5999999999999 L1648.5,740.6999999999999" stroke="#4a4a4a" stroke-width="1.7" stroke-linecap="round"/><path d="M1645.9,742.4999999999999 H1650.3 V738.0999999999999 Z" fill="#4a4a4a" stroke="#4a4a4a" stroke-width="0.8" stroke-linejoin="round"/></svg>
<div class="t" style="left:1654.1px;top:734.00px;font-size:11.66px;font-weight:400;color:#5a5a5a;-webkit-text-stroke:0.4px #5a5a5a;letter-spacing:0.64px;">65%</div>
<div class="t" style="left:1773.6px;top:697.00px;font-size:12px;font-weight:400;color:#303030;letter-spacing:0.547px;">Added to cart</div>
<div class="t" style="left:1773.6px;top:715.00px;font-size:14.84px;font-weight:400;color:#303030;letter-spacing:0.15px;">5.65%</div>
<div class="t" style="left:1773.6px;top:735.00px;font-size:12px;font-weight:400;color:#303030;letter-spacing:-0.155px;">173,218</div>
<svg width="2331" height="1207"><path d="M1826.7,741.8 L1829.8,738.6999999999999" stroke="#12874e" stroke-width="1.7" stroke-linecap="round"/><path d="M1827.2,736.9 H1831.6 V741.3 Z" fill="#12874e" stroke="#12874e" stroke-width="0.8" stroke-linejoin="round"/></svg>
<div class="t" style="left:1835.3999999999999px;top:734.00px;font-size:11.66px;font-weight:700;color:#12874e;letter-spacing:0.44px;">23%</div>
<div class="t" style="left:1964px;top:697.00px;font-size:12px;font-weight:400;color:#303030;letter-spacing:0.41px;">Reached checkout</div>
<div class="t" style="left:1964px;top:715.00px;font-size:14.84px;font-weight:400;color:#303030;letter-spacing:0.425px;">4.38%</div>
<div class="t" style="left:1964px;top:735.00px;font-size:12px;font-weight:400;color:#303030;letter-spacing:0.145px;">134,321</div>
<svg width="2331" height="1207"><path d="M2017.6000000000001,741.8 L2020.7,738.6999999999999" stroke="#12874e" stroke-width="1.7" stroke-linecap="round"/><path d="M2018.1000000000001,736.9 H2022.5 V741.3 Z" fill="#12874e" stroke="#12874e" stroke-width="0.8" stroke-linejoin="round"/></svg>
<div class="t" style="left:2026.3px;top:734.00px;font-size:11.66px;font-weight:700;color:#12874e;letter-spacing:0.9px;">20%</div>
<div class="t" style="left:2154px;top:697.00px;font-size:12px;font-weight:400;color:#303030;letter-spacing:0.503px;">Completed checkout</div>
<div class="t" style="left:2154px;top:715.00px;font-size:14.84px;font-weight:400;color:#303030;letter-spacing:0.575px;">2.23%</div>
<div class="t" style="left:2154px;top:735.00px;font-size:12.72px;font-weight:400;color:#303030;letter-spacing:0.462px;">68,566</div>
<svg width="2331" height="1207"><path d="M2204.2000000000003,741.8 L2207.3,738.6999999999999" stroke="#12874e" stroke-width="1.7" stroke-linecap="round"/><path d="M2204.7000000000003,736.9 H2209.1000000000004 V741.3 Z" fill="#12874e" stroke="#12874e" stroke-width="0.8" stroke-linejoin="round"/></svg>
<div class="t" style="left:2212.9px;top:734.00px;font-size:11.66px;font-weight:700;color:#12874e;letter-spacing:0.9px;">3%</div>
<svg width="2331" height="1207"><circle cx="1580.9" cy="701.9" r="7.9" fill="#f1f1f2"/><path d="M1580.6,696.2 V699.6 M1583.4,699.4 L1577.7,701.8 M1583.4,702.9 L1577.7,705.2 M1580.7,704 V708" fill="none" stroke="#0b1138" stroke-width="1.5" stroke-linecap="round"/></svg>
<svg width="2331" height="1207">
<defs><linearGradient id="tg" x1="0" x2="1" y1="0" y2="0"><stop offset="0" stop-color="#8eaaf6"/><stop offset="1" stop-color="#a9c1fa"/></linearGradient></defs>
<path d="M1573,934.5 V773 A4,4 0 0 1 1577,769 H1716 V934.5 Z" fill="#305fe8"/>
<rect x="1573" y="801.7" width="143" height="3.7" fill="#5b80ee"/>
<rect x="1573" y="805.4" width="143" height="3.7" fill="#1238b0"/>
<rect x="1573" y="809.1" width="143" height="3.7" fill="#5b80ee"/>
<rect x="1573" y="812.8" width="143" height="3.7" fill="#1238b0"/>
<path d="M1572.5,801.7 L1578.5,805.4 L1573.2,809.3 L1578.3,812.6 L1572.5,816.5 Z" fill="#fff"/>
<path d="M1717,767 L1760.4,875.4 V934.5 H1717 Z" fill="url(#tg)"/>
<rect x="1763.4" y="875.7" width="142.4" height="58.8" fill="#305fe8"/>
<path d="M1906.8,875.7 L1951,880.7 V934.5 H1906.8 Z" fill="url(#tg)"/>
<rect x="1953.7" y="884.1" width="142.3" height="50.4" fill="#305fe8"/>
<path d="M2097,884.1 L2140.6,894.8 V934.5 H2097 Z" fill="url(#tg)"/>
<path d="M2144,934.5 V924.6 A4,4 0 0 1 2148,920.6 H2282.3 A4,4 0 0 1 2286.3,924.6 V934.5 Z" fill="#305fe8"/>
</svg>
<div style="position:absolute;left:28px;top:877px;width:749px;height:353px;background:#fff;border-radius:12px;box-shadow:0 0 0 1px rgba(0,0,0,0.055),0 1px 0 1px rgba(0,0,0,0.075),0 2px 2px rgba(0,0,0,0.03)"></div>
<div class="t" style="left:44.1px;top:897.00px;font-size:13px;font-weight:400;color:#303030;-webkit-text-stroke:0.4px #303030;letter-spacing:0.577px;">Sessions over time</div>
<div style="position:absolute;left:44.1px;top:911.5px;width:118.6px;height:2.0px;background-image:linear-gradient(90deg,#c9c9c9 50%,transparent 50%);background-size:4px 2px"></div>
<div class="t" style="left:44.1px;top:920.00px;font-size:21.2px;font-weight:400;color:#303030;-webkit-text-stroke:0.4px #303030;letter-spacing:0.809px;">3,064,063</div>
<svg width="2331" height="1207"><path d="M151.4,929.3 L154.5,932.4" stroke="#4a4a4a" stroke-width="1.7" stroke-linecap="round"/><path d="M151.9,934.1999999999999 H156.3 V929.8 Z" fill="#4a4a4a" stroke="#4a4a4a" stroke-width="0.8" stroke-linejoin="round"/></svg>
<div class="t" style="left:160.1px;top:926.00px;font-size:11.66px;font-weight:400;color:#616161;-webkit-text-stroke:0.4px #616161;letter-spacing:0.69px;">65%</div>
<svg width="2331" height="1207"><path d="M86,961.5 H756.7" stroke="#eeeeee" stroke-width="1"/><path d="M86,1005.5 H756.7" stroke="#eeeeee" stroke-width="1"/><path d="M86,1048.5 H756.7" stroke="#eeeeee" stroke-width="1"/><path d="M86,1091.5 H756.7" stroke="#eeeeee" stroke-width="1"/><path d="M86,1134.5 H756.7" stroke="#eeeeee" stroke-width="1"/></svg>
<div class="t" style="right:2266.4px;top:955.00px;font-size:11.66px;font-weight:400;color:#6d7175;letter-spacing:0.135px;">4M</div>
<div class="t" style="right:2266.4px;top:998.00px;font-size:11.66px;font-weight:400;color:#6d7175;letter-spacing:0.135px;">3M</div>
<div class="t" style="right:2266.4px;top:1042.00px;font-size:11.66px;font-weight:400;color:#6d7175;letter-spacing:0.135px;">2M</div>
<div class="t" style="right:2266.4px;top:1087.00px;font-size:10.45px;font-weight:400;color:#6d7175;letter-spacing:-0.081px;">1M</div>
<div class="t" style="right:2266.4px;top:1129.00px;font-size:11px;font-weight:400;color:#6d7175;">0</div>
<div class="t" style="left:86.0px;transform:translateX(-50%);top:1151.00px;font-size:11px;font-weight:400;color:#6d7175;">Apr</div>
<div class="t" style="left:207.9px;transform:translateX(-50%);top:1151.00px;font-size:11px;font-weight:400;color:#6d7175;">Jun</div>
<div class="t" style="left:329.8px;transform:translateX(-50%);top:1151.00px;font-size:11px;font-weight:400;color:#6d7175;">Aug</div>
<div class="t" style="left:451.70000000000005px;transform:translateX(-50%);top:1151.00px;font-size:11px;font-weight:400;color:#6d7175;">Oct</div>
<div class="t" style="left:573.6px;transform:translateX(-50%);top:1151.00px;font-size:11px;font-weight:400;color:#6d7175;">Dec</div>
<div class="t" style="left:695.5px;transform:translateX(-50%);top:1151.00px;font-size:11px;font-weight:400;color:#6d7175;">Feb</div>
<svg width="2331" height="1207"><path d="M86.0,1131.0 C113.5,1130.9 218.2,1130.8 251.3,1130.3 C284.4,1129.8 274.4,1129.6 284.3,1128.3 C294.2,1127.0 299.7,1124.0 310.7,1122.7 C321.7,1121.4 339.9,1121.5 350.4,1120.4 C360.9,1119.3 364.1,1116.9 373.5,1116.1 C382.9,1115.3 396.6,1116.5 406.5,1115.5 C416.4,1114.5 424.8,1111.2 433.0,1109.8 C441.2,1108.4 449.9,1108.6 456.0,1107.2 C462.1,1105.8 465.4,1104.5 469.3,1101.3 C473.2,1098.1 475.9,1093.2 479.2,1088.0 C482.5,1082.8 485.8,1074.3 489.1,1069.9 C492.4,1065.5 494.6,1063.4 499.0,1061.6 C503.4,1059.8 511.1,1059.8 515.5,1059.0 C519.9,1058.2 521.8,1059.5 525.4,1056.7 C529.0,1053.9 535.1,1044.8 537.0,1042.4" fill="none" stroke="#80c9ea" stroke-width="1.5" stroke-dasharray="4 4"/><path d="M86.0,1126.7 C98.1,1126.7 139.5,1126.9 158.8,1126.7 C178.1,1126.5 179.7,1125.8 201.7,1125.7 C223.7,1125.7 273.3,1126.6 290.9,1126.4 C308.5,1126.2 300.2,1124.7 307.4,1124.4 C314.5,1124.1 323.9,1124.2 333.8,1124.4 C343.7,1124.6 353.1,1125.2 366.9,1125.4 C380.7,1125.6 402.6,1125.4 416.4,1125.7 C430.2,1126.0 440.1,1127.1 449.5,1127.0 C458.9,1126.9 465.2,1126.1 472.6,1125.0 C480.0,1123.9 490.4,1121.2 494.0,1120.4" fill="none" stroke="#0ba3ec" stroke-width="1.8"/></svg>
<svg width="2331" height="1207"><circle cx="251.3" cy="1192.8" r="4" fill="#0ba3ec"/><circle cx="413.1" cy="1192.8" r="4" fill="#80c9ea"/></svg>
<div class="t" style="left:262.8px;top:1188.00px;font-size:11px;font-weight:400;color:#6d7175;letter-spacing:0.285px;">1 Apr 2025–31 Mar 2026</div>
<div class="t" style="left:425.4px;top:1188.00px;font-size:11px;font-weight:400;color:#6d7175;letter-spacing:0.266px;">1 Apr 2024–31 Mar 2025</div>
<div style="position:absolute;left:793px;top:877px;width:748px;height:353px;background:#fff;border-radius:12px;box-shadow:0 0 0 1px rgba(0,0,0,0.055),0 1px 0 1px rgba(0,0,0,0.075),0 2px 2px rgba(0,0,0,0.03)"></div>
<div class="t" style="left:808.9px;top:898.00px;font-size:13px;font-weight:400;color:#303030;-webkit-text-stroke:0.4px #303030;letter-spacing:0.554px;">Conversion rate over time</div>
<div style="position:absolute;left:808.9px;top:912px;width:161.10000000000002px;height:2px;background-image:linear-gradient(90deg,#c9c9c9 50%,transparent 50%);background-size:4px 2px"></div>
<svg width="2331" height="1207"><path d="M1514.5,895.6 L1521.0,907.1 H1508.0 Z" fill="none" stroke="#616161" stroke-width="1.2" stroke-linejoin="round"/><path d="M1514.5,899.8000000000001 V903.1" stroke="#616161" stroke-width="1.3" stroke-linecap="round"/><circle cx="1514.5" cy="905.0" r="0.75" fill="#616161"/></svg>
<div class="t" style="left:808.9px;top:920.00px;font-size:21.2px;font-weight:400;color:#303030;-webkit-text-stroke:0.4px #303030;letter-spacing:0.644px;">2.23%</div>
<svg width="2331" height="1207"><path d="M878.9,933.7 L882,930.6" stroke="#12874e" stroke-width="1.7" stroke-linecap="round"/><path d="M879.4,928.8000000000001 H883.8 V933.2 Z" fill="#12874e" stroke="#12874e" stroke-width="0.8" stroke-linejoin="round"/></svg>
<div class="t" style="left:887.6px;top:926.00px;font-size:11.66px;font-weight:700;color:#12874e;letter-spacing:0.168px;">194%</div>
<svg width="2331" height="1207"><path d="M851.3,962.5 H1522" stroke="#eeeeee" stroke-width="1"/><path d="M851.3,1005.5 H1522" stroke="#eeeeee" stroke-width="1"/><path d="M851.3,1048.5 H1522" stroke="#eeeeee" stroke-width="1"/><path d="M851.3,1091.5 H1522" stroke="#eeeeee" stroke-width="1"/><path d="M851.3,1135.5 H1522" stroke="#eeeeee" stroke-width="1"/></svg>
<div class="t" style="right:1501.2px;top:955.00px;font-size:11.66px;font-weight:400;color:#6d7175;letter-spacing:0.572px;">4%</div>
<div class="t" style="right:1501.2px;top:999.00px;font-size:11.66px;font-weight:400;color:#6d7175;letter-spacing:0.572px;">3%</div>
<div class="t" style="right:1501.2px;top:1042.00px;font-size:11.66px;font-weight:400;color:#6d7175;letter-spacing:0.572px;">2%</div>
<div class="t" style="right:1501.2px;top:1086.00px;font-size:11px;font-weight:400;color:#6d7175;letter-spacing:-0.526px;">1%</div>
<div class="t" style="right:1501.2px;top:1128.00px;font-size:11.66px;font-weight:400;color:#6d7175;letter-spacing:0.572px;">0%</div>
<div class="t" style="left:851.3px;transform:translateX(-50%);top:1151.00px;font-size:11px;font-weight:400;color:#6d7175;">Apr</div>
<div class="t" style="left:973.1199999999999px;transform:translateX(-50%);top:1151.00px;font-size:11px;font-weight:400;color:#6d7175;">Jun</div>
<div class="t" style="left:1094.94px;transform:translateX(-50%);top:1151.00px;font-size:11px;font-weight:400;color:#6d7175;">Aug</div>
<div class="t" style="left:1216.76px;transform:translateX(-50%);top:1151.00px;font-size:11px;font-weight:400;color:#6d7175;">Oct</div>
<div class="t" style="left:1338.58px;transform:translateX(-50%);top:1151.00px;font-size:11px;font-weight:400;color:#6d7175;">Dec</div>
<div class="t" style="left:1460.3999999999999px;transform:translateX(-50%);top:1151.00px;font-size:11px;font-weight:400;color:#6d7175;">Feb</div>
<svg width="2331" height="1207"><path d="M851.3,980.2 C854.1,980.4 861.1,979.9 868.3,981.5 C875.5,983.1 885.6,988.5 894.3,990.0 C903.0,991.5 906.3,990.4 920.4,990.6 C934.5,990.8 966.0,990.5 979.1,991.3 C992.2,992.1 991.1,993.7 998.7,995.5 C1006.3,997.3 1016.6,1000.5 1024.8,1002.0 C1032.9,1003.5 1041.6,1002.4 1047.6,1004.3 C1053.6,1006.2 1056.2,1009.0 1060.6,1013.5 C1064.9,1018.0 1069.3,1027.1 1073.7,1031.4 C1078.1,1035.7 1080.7,1037.6 1086.7,1039.5 C1092.7,1041.4 1102.4,1037.3 1109.5,1042.8 C1116.6,1048.2 1123.7,1065.1 1129.1,1072.2 C1134.5,1079.3 1136.7,1082.6 1142.1,1085.2 C1147.5,1087.8 1155.2,1086.7 1161.7,1087.8 C1168.2,1088.9 1174.8,1089.7 1181.3,1091.7 C1187.8,1093.7 1194.3,1098.2 1200.8,1099.9 C1207.3,1101.7 1213.9,1101.5 1220.4,1102.2 C1226.9,1102.9 1233.5,1103.0 1240.0,1104.1 C1246.5,1105.2 1250.3,1107.6 1259.5,1108.7 C1268.7,1109.8 1285.6,1109.1 1295.4,1110.6 C1305.2,1112.1 1310.1,1116.2 1318.2,1117.8 C1326.3,1119.4 1336.7,1120.4 1344.3,1120.4 C1351.9,1120.4 1357.3,1119.4 1363.8,1117.8 C1370.3,1116.2 1374.7,1112.5 1383.4,1110.6 C1392.1,1108.7 1406.2,1107.7 1416.0,1106.4 C1425.8,1105.2 1432.9,1104.2 1442.1,1103.1 C1451.3,1102.0 1463.8,1103.2 1471.4,1099.9 C1479.0,1096.7 1482.8,1088.8 1487.7,1083.6 C1492.6,1078.4 1495.1,1072.6 1500.8,1068.9 C1506.5,1065.2 1518.5,1062.9 1522.0,1061.7" fill="none" stroke="#80c9ea" stroke-width="1.5" stroke-dasharray="4 4"/><path d="M851.3,1042.8 C854.7,1042.8 863.2,1043.3 871.5,1042.8 C879.8,1042.2 891.6,1039.8 900.9,1039.5 C910.1,1039.2 918.3,1038.9 927.0,1041.2 C935.7,1043.5 945.4,1050.8 953.0,1053.2 C960.6,1055.6 961.7,1056.0 972.6,1055.8 C983.5,1055.6 1005.7,1052.9 1018.2,1051.9 C1030.7,1050.9 1040.5,1051.2 1047.6,1050.0 C1054.7,1048.8 1055.7,1047.2 1060.6,1044.4 C1065.5,1041.6 1070.4,1035.4 1076.9,1033.0 C1083.4,1030.6 1085.1,1030.3 1099.8,1029.8 C1114.5,1029.3 1148.7,1031.2 1165.0,1029.8 C1181.3,1028.4 1187.3,1023.1 1197.6,1021.6 C1207.9,1020.1 1213.9,1021.4 1226.9,1020.6 C1239.9,1019.8 1263.8,1017.3 1275.8,1017.0 C1287.8,1016.7 1289.9,1017.7 1298.6,1018.7 C1307.3,1019.7 1319.3,1022.0 1328.0,1023.2 C1336.7,1024.4 1344.8,1024.5 1350.8,1025.9 C1356.8,1027.3 1358.9,1027.5 1363.8,1031.4 C1368.7,1035.3 1374.2,1045.3 1380.2,1049.3 C1386.2,1053.3 1389.4,1054.8 1399.7,1055.2 C1410.0,1055.6 1429.6,1052.6 1442.1,1051.9 C1454.6,1051.2 1464.9,1051.9 1474.7,1051.0 C1484.5,1050.1 1492.9,1047.5 1500.8,1046.7 C1508.7,1045.9 1518.5,1046.2 1522.0,1046.1" fill="none" stroke="#0ba3ec" stroke-width="1.8"/></svg>
<svg width="2331" height="1207"><circle cx="1015.6" cy="1193.4" r="4" fill="#0ba3ec"/><circle cx="1178" cy="1193.4" r="4" fill="#80c9ea"/></svg>
<div class="t" style="left:1027.4px;top:1189.00px;font-size:11px;font-weight:400;color:#6d7175;letter-spacing:0.252px;">1 Apr 2025–31 Mar 2026</div>
<div class="t" style="left:1189.7px;top:1189.00px;font-size:11px;font-weight:400;color:#6d7175;letter-spacing:0.285px;">1 Apr 2024–31 Mar 2025</div>
<div style="position:absolute;left:1033px;top:1203px;width:38px;height:12px;background:#8a8a8a;border-radius:4px"></div>
<div style="position:absolute;left:1557px;top:967px;width:749px;height:333px;background:#fff;border-radius:12px;box-shadow:0 0 0 1px rgba(0,0,0,0.055),0 1px 0 1px rgba(0,0,0,0.075),0 2px 2px rgba(0,0,0,0.03)"></div>
<div class="t" style="left:1573.5px;top:987.00px;font-size:13px;font-weight:400;color:#303030;-webkit-text-stroke:0.4px #303030;letter-spacing:0.552px;">Total sales by social referrer</div>
<div style="position:absolute;left:1573.5px;top:1001.5px;width:176.79999999999995px;height:2.0px;background-image:linear-gradient(90deg,#c9c9c9 50%,transparent 50%);background-size:4px 2px"></div>
<div class="t" style="left:1573.2px;top:1015.00px;font-size:12px;font-weight:400;color:#6d7175;letter-spacing:0.108px;">facebook</div>
<div style="position:absolute;left:1573px;top:1031.3px;width:572.5999999999999px;height:10.700000000000045px;background:#13aaef;border-radius:0 3px 3px 0"></div>
<div style="position:absolute;left:1573px;top:1044.5px;width:503px;height:10.5px;background:#84c8e8;border-radius:0 3px 3px 0"></div>
<div class="t" style="left:2155.7px;top:1031.00px;font-size:12px;font-weight:400;color:#6d7175;letter-spacing:-0.195px;">A$2.61M</div>
<svg width="2331" height="1207"><path d="M2212.5,1038.7 L2215.6,1035.6000000000001" stroke="#12874e" stroke-width="1.7" stroke-linecap="round"/><path d="M2213.0,1033.8000000000002 H2217.4 V1038.2 Z" fill="#12874e" stroke="#12874e" stroke-width="0.8" stroke-linejoin="round"/></svg>
<div class="t" style="left:2221.2px;top:1031.00px;font-size:12px;font-weight:700;color:#12874e;letter-spacing:-0.336px;">14%</div>
<div class="t" style="left:2086.7px;top:1044.00px;font-size:12px;font-weight:400;color:#6d7175;letter-spacing:0.02px;">A$2.3M</div>
<div class="t" style="left:1573.2px;top:1075.00px;font-size:12px;font-weight:400;color:#6d7175;letter-spacing:0.034px;">instagram</div>
<div style="position:absolute;left:1573px;top:1091.1px;width:143.5999999999999px;height:10.700000000000045px;background:#13aaef;border-radius:0 3px 3px 0"></div>
<div style="position:absolute;left:1573px;top:1104.3px;width:107.59999999999991px;height:10.5px;background:#84c8e8;border-radius:0 3px 3px 0"></div>
<div class="t" style="left:1727.2px;top:1091.00px;font-size:12px;font-weight:400;color:#6d7175;letter-spacing:-0.108px;">A$656.8K</div>
<svg width="2331" height="1207"><path d="M1790.5,1098.5 L1793.6,1095.4" stroke="#12874e" stroke-width="1.7" stroke-linecap="round"/><path d="M1791.0,1093.6000000000001 H1795.3999999999999 V1098.0 Z" fill="#12874e" stroke="#12874e" stroke-width="0.8" stroke-linejoin="round"/></svg>
<div class="t" style="left:1799.1999999999998px;top:1091.00px;font-size:12px;font-weight:700;color:#12874e;letter-spacing:0.514px;">33%</div>
<div class="t" style="left:1691.1px;top:1104.00px;font-size:12px;font-weight:400;color:#6d7175;letter-spacing:0.02px;">A$492.5K</div>
<div class="t" style="left:1573.2px;top:1135.00px;font-size:12px;font-weight:400;color:#6d7175;letter-spacing:0.389px;">tiktok</div>
<div style="position:absolute;left:1573px;top:1151.1px;width:32.59999999999991px;height:10.700000000000045px;background:#13aaef;border-radius:0 3px 3px 0"></div>
<div style="position:absolute;left:1573px;top:1164.3px;width:61px;height:10.5px;background:#84c8e8;border-radius:0 3px 3px 0"></div>
<div class="t" style="left:1616px;top:1151.00px;font-size:12px;font-weight:400;color:#6d7175;letter-spacing:-0.308px;">A$150.6K</div>
<svg width="2331" height="1207"><path d="M1677.5,1154.3000000000002 L1680.6,1157.4" stroke="#4a4a4a" stroke-width="1.7" stroke-linecap="round"/><path d="M1678.0,1159.2 H1682.3999999999999 V1154.8000000000002 Z" fill="#4a4a4a" stroke="#4a4a4a" stroke-width="0.8" stroke-linejoin="round"/></svg>
<div class="t" style="left:1686.1999999999998px;top:1151.00px;font-size:12.72px;font-weight:700;color:#4a4a4a;letter-spacing:0.472px;">46%</div>
<div class="t" style="left:1644.5px;top:1164.00px;font-size:12px;font-weight:400;color:#6d7175;letter-spacing:0.02px;">A$280.5K</div>
<div class="t" style="left:1573.2px;top:1195.00px;font-size:12px;font-weight:400;color:#6d7175;letter-spacing:0.543px;">youtube</div>
</div></body></html>
